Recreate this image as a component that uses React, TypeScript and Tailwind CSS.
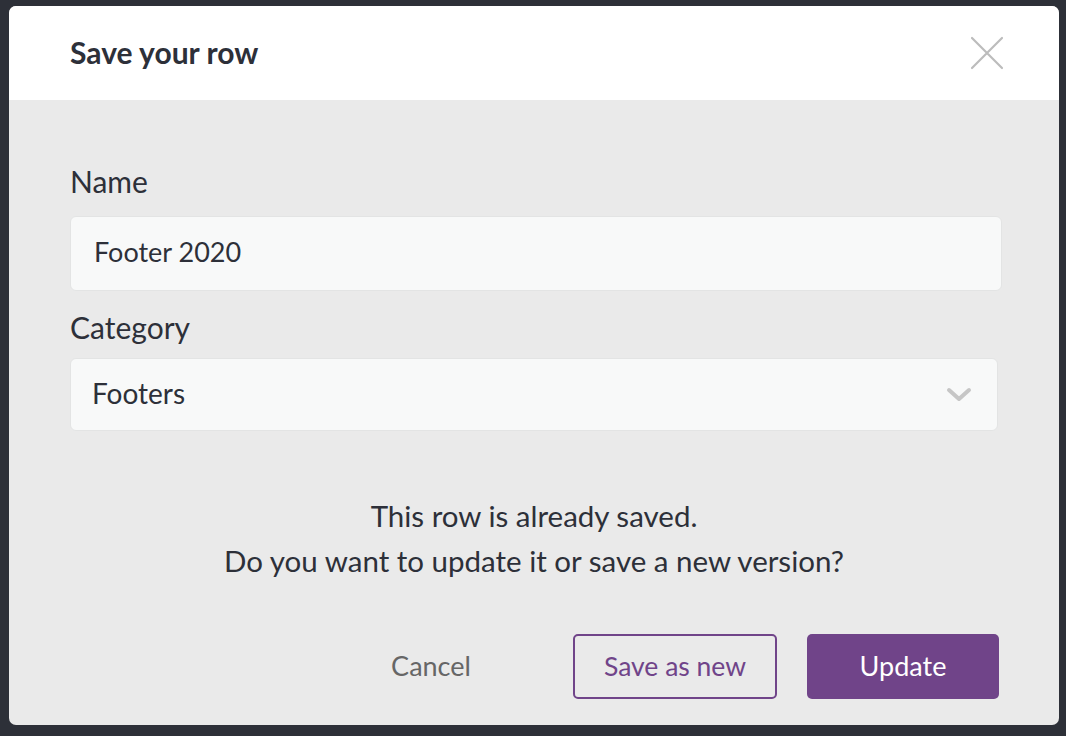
import React from 'react';

function CloseIcon() {
  return (
    <svg width="34" height="34" viewBox="0 0 34 34" fill="none">
      <path d="M2 2L32 32M32 2L2 32" stroke="#bcbcbc" strokeWidth="2.2" strokeLinecap="round" />
    </svg>
  );
}

function ChevronDown() {
  return (
    <svg width="26" height="16" viewBox="0 0 26 16" fill="none">
      <path d="M3 3L13 12L23 3" stroke="#c6c6c6" strokeWidth="4" strokeLinecap="round" strokeLinejoin="round" />
    </svg>
  );
}

export default function App() {
  return (
    <div
      className="w-[1066px] h-[736px] bg-[#2d3038] pt-[6px] pl-[9px]"
      style={{ fontFamily: 'Lato, "Open Sans", sans-serif' }}
    >
      <div className="w-[1050px] h-[719px] rounded-[7px] overflow-hidden bg-[#eaeaea] flex flex-col">
        <div className="h-[94px] bg-white flex items-center justify-between pl-[61px] pr-[55px] shrink-0">
          <h1 className="text-[30px] font-bold text-[#2d3039] pb-[2px]">Save your row</h1>
          <CloseIcon />
        </div>

        <div className="flex flex-col pl-[61px] pr-[57px] pt-[63px]">
          <label className="text-[30px] text-[#2d3039] leading-[36px]">Name</label>
          <div className="mt-[17px] h-[75px] w-[932px] bg-[#f8f9f9] rounded-[6px] border border-[#e3e4e4] flex items-center pl-[23px] pb-[2px]">
            <span className="text-[27px] text-[#2d3039]">Footer 2020</span>
          </div>

          <label className="mt-[18px] text-[30px] text-[#2d3039] leading-[36px]">Category</label>
          <div className="mt-[13px] h-[73px] w-[928px] bg-[#f8f9f9] rounded-[6px] border border-[#e3e4e4] flex items-center justify-between pl-[21px] pr-[25px]">
            <span className="text-[28px] text-[#2d3039] pb-[3px]">Footers</span>
            <ChevronDown />
          </div>

          <div className="mt-[62px] flex flex-col items-center text-[29.5px] leading-[45px] text-[#2d3039] pr-[4px]">
            <p>This row is already saved.</p>
            <p>Do you want to update it or save a new version?</p>
          </div>

          <div className="mt-[51px] flex items-center justify-end gap-[30px] pr-[3px]">
            <button className="text-[27px] text-[#666666] w-[160px] h-[65px] mr-[32px]">Cancel</button>
            <button className="w-[204px] h-[65px] rounded-[5px] border-2 border-[#704489] text-[26.5px] text-[#704489] bg-transparent">
              Save as new
            </button>
            <button className="w-[192px] h-[65px] rounded-[5px] bg-[#704489] text-[27px] text-white">
              Update
            </button>
          </div>
        </div>
      </div>
    </div>
  );
}
